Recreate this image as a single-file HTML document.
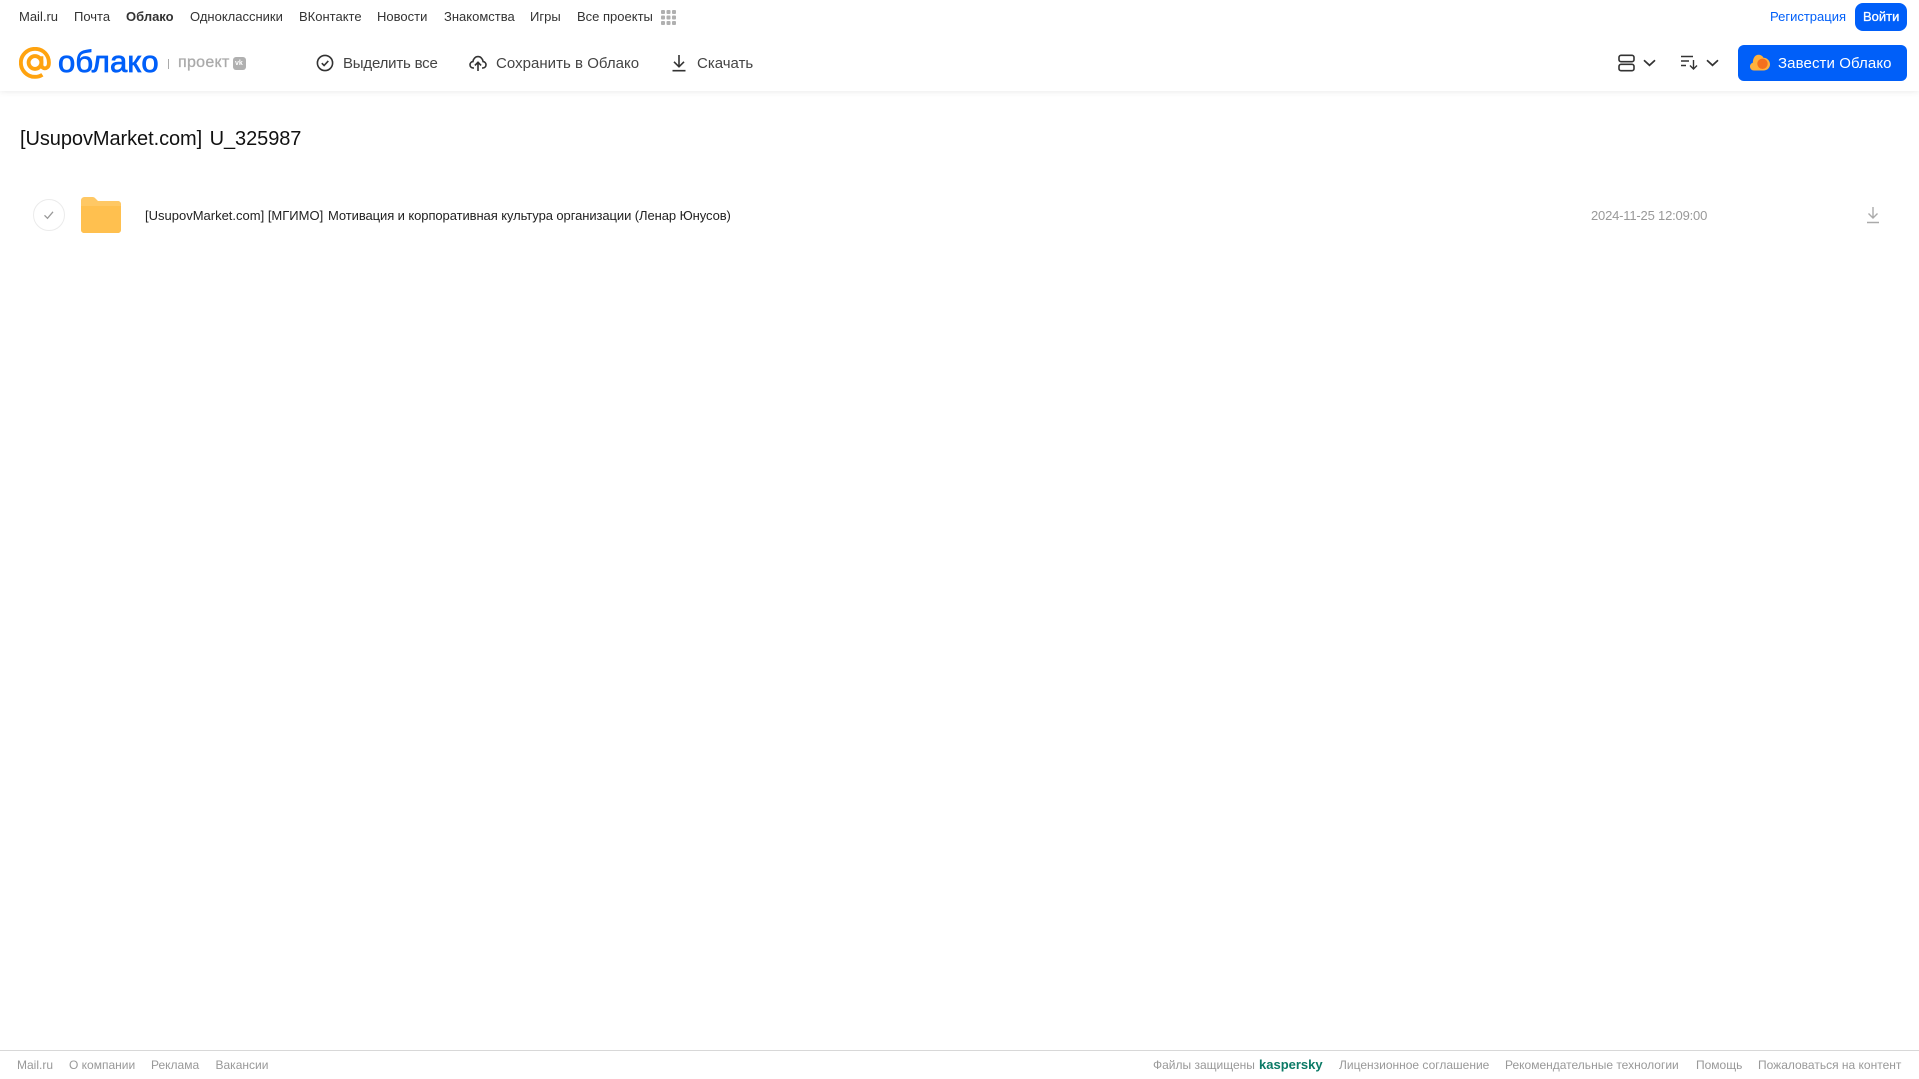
<!DOCTYPE html>
<html lang="ru">
<head>
<meta charset="utf-8">
<title>Облако</title>
<style>
html,body{margin:0;padding:0;background:#fff}
body{width:1919px;height:1079px;position:relative;overflow:hidden;font-family:"Liberation Sans","Noto Sans CJK SC",sans-serif;color:#333}
.t{position:absolute;white-space:nowrap;line-height:18px}
.n{top:8px;font-size:13px;color:#333}
.a{top:55px;font-size:15px;color:#444}
.f{top:1056px;font-size:12px;color:#999}
svg{position:absolute;display:block}
#hdr{position:absolute;left:0;top:0;width:1919px;height:91px;background:#fff;box-shadow:0 1px 6px rgba(0,0,0,.08)}
</style>
</head>
<body>
<div id="hdr"></div>

<span class="t n" style="left:19px">Mail.ru</span>
<span class="t n" style="left:74px">Почта</span>
<span class="t n" style="left:126px;font-weight:bold">Облако</span>
<span class="t n" style="left:190px">Одноклассники</span>
<span class="t n" style="left:299px">ВКонтакте</span>
<span class="t n" style="left:377px">Новости</span>
<span class="t n" style="left:444px">Знакомства</span>
<span class="t n" style="left:530px">Игры</span>
<span class="t n" style="left:577px">Все проекты</span>
<svg style="left:661px;top:10px" width="15" height="15" fill="#b0b0b0">
<rect x="0" y="0" width="4" height="4" rx="1"/><rect x="5.5" y="0" width="4" height="4" rx="1"/><rect x="11" y="0" width="4" height="4" rx="1"/>
<rect x="0" y="5.5" width="4" height="4" rx="1"/><rect x="5.5" y="5.5" width="4" height="4" rx="1"/><rect x="11" y="5.5" width="4" height="4" rx="1"/>
<rect x="0" y="11" width="4" height="4" rx="1"/><rect x="5.5" y="11" width="4" height="4" rx="1"/><rect x="11" y="11" width="4" height="4" rx="1"/>
</svg>

<span class="t n" style="left:1770px;color:#005ff9">Регистрация</span>
<div style="position:absolute;left:1855px;top:3px;width:52px;height:28px;background:#005ff9;border-radius:8px"></div>
<span class="t" style="left:1863px;top:8px;font-size:13px;color:#fff;-webkit-text-stroke:.3px #fff">Войти</span>

<!-- logo -->
<svg style="left:19px;top:47px" width="32" height="32" viewBox="0 0 33 33" fill="none" stroke="#ffa30f" stroke-width="4">
<circle cx="16.5" cy="16" r="6.6"/>
<path d="M23.1 9.6v8.6c0 5 6.9 5 7.6-.2C31.8 8.6 24.8 1.900 16.500 1.900 8.500 1.900 1.900 8.300 1.900 16.200c0 8 6.500 14.600 14.600 14.600 2.900 0 5.300-.7 7.600-2.200"/>
</svg>
<span class="t" style="left:58px;top:44px;font-size:31px;line-height:36px;color:#005ff9;-webkit-text-stroke:.8px #005ff9;letter-spacing:.1px">облако</span>
<div style="position:absolute;left:168px;top:59px;width:1px;height:10px;background:#aaa"></div>
<span class="t" style="left:178px;top:54px;font-size:16px;color:#aaa;letter-spacing:.3px;-webkit-text-stroke:.3px #aaa">проект</span>
<div style="position:absolute;left:233px;top:57px;width:13px;height:13px;background:#b0b0b0;border-radius:3px"></div>
<span class="t" style="left:235px;top:55px;font-size:7px;font-weight:bold;color:#fff">vk</span>

<!-- toolbar -->
<svg style="left:316px;top:54px" width="18" height="18" viewBox="0 0 18 18" fill="none" stroke="#333" stroke-width="1.6">
<circle cx="9" cy="9" r="7.6"/><path d="M5.8 9.2l2.3 2.3 4.2-4.6"/>
</svg>
<span class="t a" style="left:343px;letter-spacing:-.2px">Выделить все</span>

<svg style="left:469px;top:54px" width="18" height="18" viewBox="0 0 18 18" fill="none" stroke="#333" stroke-width="1.6">
<path d="M5 14H4.300C2.400 14 1 12.600 1 10.800c0-1.700 1.200-3 2.900-3.200C4.300 4.800 6.300 2.600 9 2.600c2.600 0 4.700 2.100 5.100 5 1.700.2 2.900 1.500 2.900 3.200 0 1.800-1.400 3.200-3.300 3.200H13"/>
<path d="M9 17V8.500M5.900 11.400L9 8.300l3.100 3.100"/>
</svg>
<span class="t a" style="left:496px;letter-spacing:.03px">Сохранить в Облако</span>

<svg style="left:671px;top:54px" width="16" height="18" viewBox="0 0 16 18" fill="none" stroke="#333" stroke-width="1.6">
<path d="M8 1v11.500M3 7.800l5 5 5-5M1.500 16.700h13"/>
</svg>
<span class="t a" style="left:697px">Скачать</span>

<svg style="left:1618px;top:54px" width="17" height="18" viewBox="0 0 17 18" fill="none" stroke="#333" stroke-width="1.6">
<rect x="1" y="1.300" width="15" height="6.400" rx="2"/><rect x="1" y="10.300" width="15" height="6.400" rx="2"/>
</svg>
<svg style="left:1643px;top:59px" width="13" height="8" viewBox="0 0 13 8" fill="none" stroke="#333" stroke-width="1.700">
<path d="M1 1.300l5.500 5 5.500-5"/>
</svg>
<svg style="left:1681px;top:55px" width="17" height="15" viewBox="0 0 17 15" fill="none" stroke="#333" stroke-width="1.400">
<path d="M0 1.500h12M0 6h8M0 10.500h5M12.500 5v9M9 10.500l3.500 3.500 3.500-3.500"/>
</svg>
<svg style="left:1706px;top:59px" width="13" height="8" viewBox="0 0 13 8" fill="none" stroke="#333" stroke-width="1.700">
<path d="M1 1.300l5.500 5 5.500-5"/>
</svg>

<div style="position:absolute;left:1738px;top:45px;width:169px;height:36px;background:#005ff9;border-radius:6px"></div>
<svg style="left:1750px;top:54px" width="20" height="17" viewBox="0 0 20 17">
<path d="M4 16.500C1.800 16.500 0 14.800 0 12.500c0-1.900 1.200-3.300 2.800-3.800C3 4 5 .7 8.500.7c2.300 0 4 1.200 5 3 3.500 0 6.500 3 6.500 6.500s-2.800 6.300-6.500 6.300z" fill="#ffb13d"/>
<circle cx="12.500" cy="9.800" r="5.200" fill="#f4701d"/>
</svg>
<span class="t" style="left:1778px;top:55px;font-size:15px;color:#fff;letter-spacing:.1px">Завести Облако</span>

<!-- title -->
<span class="t" style="left:20px;top:125px;font-size:20px;line-height:28px;color:#111;word-spacing:2px;letter-spacing:-.07px">[UsupovMarket.com] U_325987</span>

<!-- row -->
<div style="position:absolute;left:33px;top:199px;width:30px;height:30px;border:1px solid #ebebeb;border-radius:50%"></div>
<svg style="left:43px;top:210px" width="12" height="10" viewBox="0 0 12 10" fill="none" stroke="#999" stroke-width="1.300">
<path d="M1.500 5.300l3 3 5.500-6.500"/>
</svg>
<svg style="left:81px;top:197px" width="40" height="36" viewBox="0 0 40 36">
<path d="M0 3.500C0 1.600 1.500 0 3.500 0h8c1.200 0 2.200.6 3 1.500L17 4h20c1.700 0 3 1.300 3 3v4H0z" fill="#ffc864"/>
<path d="M0 9h40v24c0 1.700-1.300 3-3 3H3c-1.700 0-3-1.300-3-3z" fill="#ffc04f"/>
</svg>
<span class="t" style="left:145px;top:207px;font-size:13px;color:#222">[UsupovMarket.com] [МГИМО]</span>
<span class="t" style="left:328px;top:207px;font-size:13px;color:#222;letter-spacing:-.08px">Мотивация и корпоративная культура организации (Ленар Юнусов)</span>
<span class="t" style="left:1591px;top:207px;font-size:13px;color:#999;letter-spacing:-.19px">2024-11-25 12:09:00</span>
<svg style="left:1866px;top:206px" width="14" height="18" viewBox="0 0 14 18" fill="none" stroke="#aaa" stroke-width="1.400">
<path d="M7 1v11M2.500 7.500L7 12l4.500-4.500M1 16.500h12"/>
</svg>

<!-- footer -->
<div style="position:absolute;left:0;top:1050px;width:1919px;height:1px;background:#d8d8d8"></div>
<span class="t f" style="left:17px">Mail.ru</span>
<span class="t f" style="left:69px">О компании</span>
<span class="t f" style="left:151px">Реклама</span>
<span class="t f" style="left:215.500px">Вакансии</span>
<span class="t f" style="left:1153px">Файлы защищены</span>
<span class="t" style="left:1259px;top:1056px;font-size:13px;font-weight:bold;color:#0b7a66">kaspersky</span>
<span class="t f" style="left:1339px">Лицензионное соглашение</span>
<span class="t f" style="left:1505px">Рекомендательные технологии</span>
<span class="t f" style="left:1696px">Помощь</span>
<span class="t f" style="left:1758px">Пожаловаться на контент</span>
</body>
</html>
